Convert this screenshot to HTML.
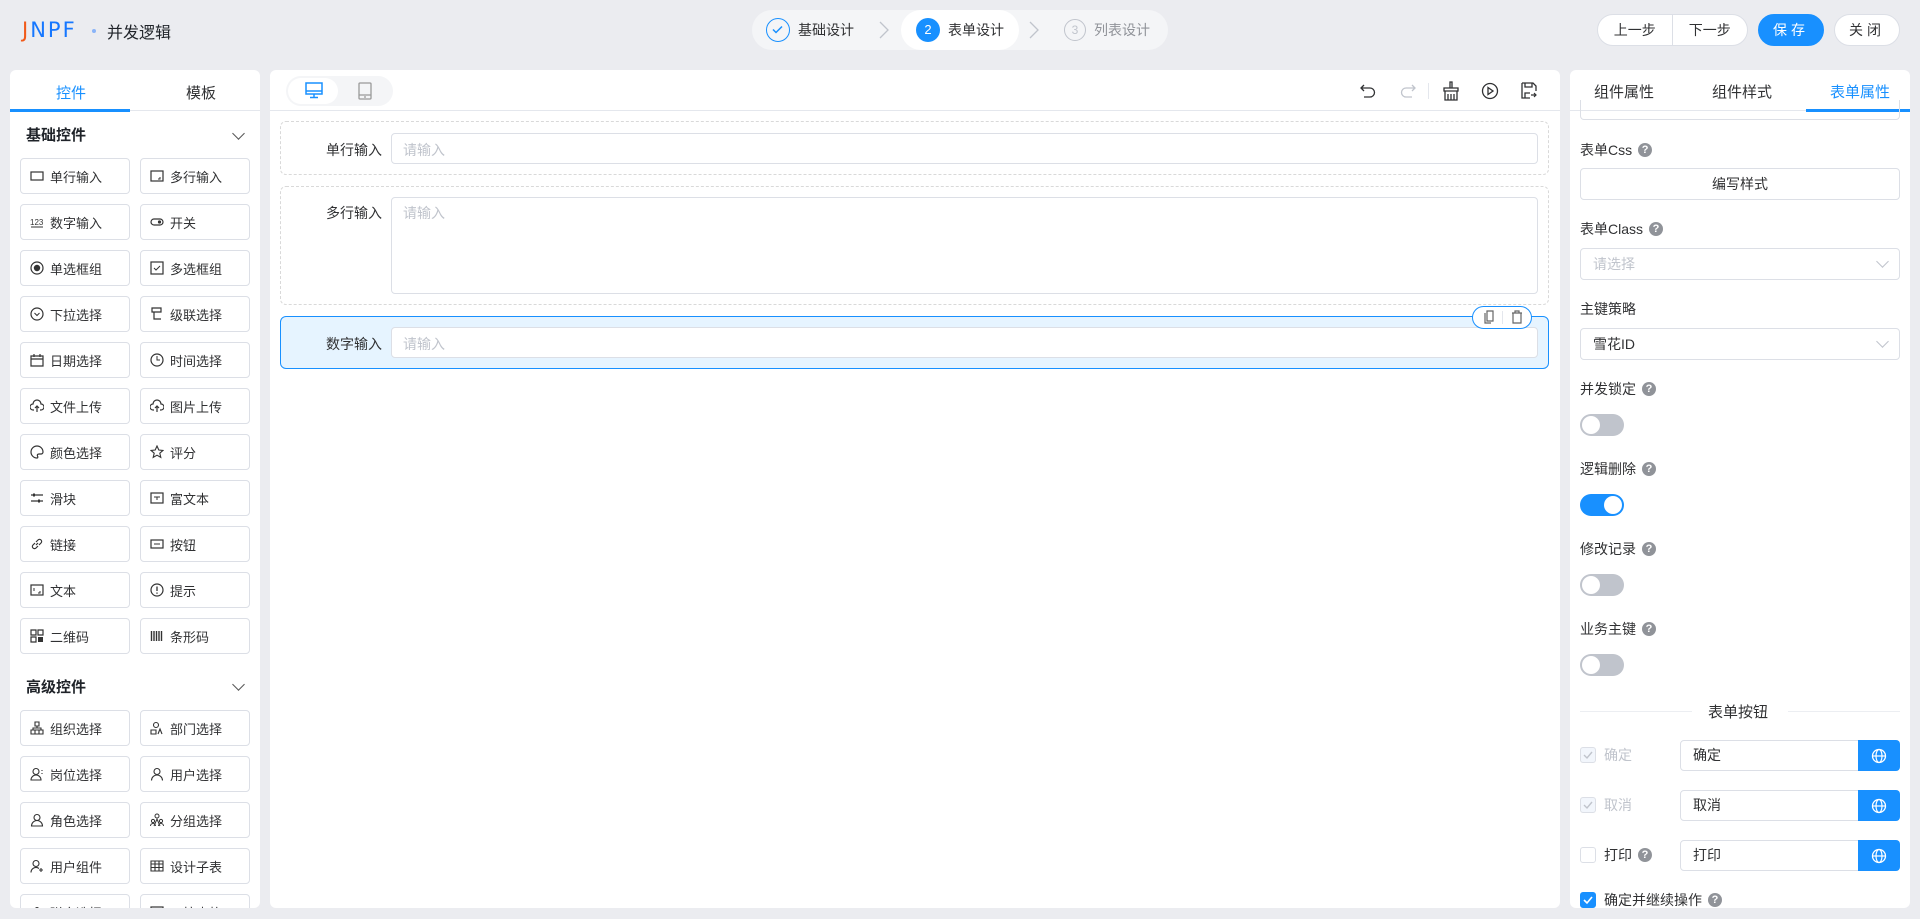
<!DOCTYPE html>
<html><head><meta charset="utf-8"><style>
*{box-sizing:border-box;margin:0;padding:0}
body{width:1920px;height:919px;background:#ebecf0;font-family:"Liberation Sans","Noto Sans CJK SC",sans-serif;font-size:14px;color:#303133;position:relative;overflow:hidden}
.abs{position:absolute}
.panel{position:absolute;background:#fff;border-radius:6px;overflow:hidden}
.item{position:absolute;width:110px;height:36px;border:1px solid #dcdfe6;border-radius:4px;font-size:13px;display:flex;align-items:center;padding-left:9px;color:#303133;background:#fff}
.item svg{width:14px;height:14px;margin-right:6px;flex:none}
.sec{position:absolute;left:26px;font-size:15px;font-weight:bold;color:#1f2329}
.chev{position:absolute;width:9px;height:9px;border-right:1.5px solid #555;border-bottom:1.5px solid #555;transform:rotate(45deg)}
.lbl{position:absolute;left:1580px;font-size:14px;color:#303133;line-height:20px;display:flex;align-items:center}
.q{display:inline-block;width:14px;height:14px;border-radius:50%;background:#909399;color:#fff;font-size:11px;font-weight:bold;line-height:14px;text-align:center;margin-left:6px}
.inp{position:absolute;border:1px solid #dcdfe6;border-radius:4px;background:#fff}
.tog{position:absolute;left:1580px;width:44px;height:22px;border-radius:11px;background:#c0c4cc}
.tog::after{content:"";position:absolute;top:2px;left:2px;width:18px;height:18px;border-radius:50%;background:#fff}
.tog.on{background:#1890ff}.tog.on::after{left:24px}
.btn{position:absolute;height:32px;border-radius:16px;border:1px solid #dcdfe6;background:#fff;display:flex;align-items:center;justify-content:center;font-size:14px}
.cb{position:absolute;left:1580px;width:16px;height:16px;border:1px solid #dcdfe6;border-radius:3px;background:#f2f6fc}
.glob{position:absolute;left:1858px;width:42px;height:31px;background:#1890ff;border-radius:0 4px 4px 0;display:flex;align-items:center;justify-content:center}
</style></head><body>

<!-- header -->
<div class="abs" style="left:22px;top:19px;font-size:21px;font-weight:normal;letter-spacing:2px;line-height:22px;font-family:'DejaVu Sans',sans-serif"><span style="color:#f05a1a">J</span><span style="color:#1677ff">NPF</span></div>
<div class="abs" style="left:92px;top:29px;width:4px;height:4px;border-radius:50%;background:#8ab4f8"></div>
<div class="abs" style="left:107px;top:19px;font-size:16px;color:#1f2329">并发逻辑</div>

<div class="abs" style="left:752px;top:10px;width:416px;height:40px;background:#f4f5f7;border-radius:20px"></div>
<div class="abs" style="left:901px;top:10px;width:118px;height:40px;background:#fff;border-radius:20px"></div>
<div class="abs" style="left:766px;top:18px;width:24px;height:24px;border:1.5px solid #1890ff;border-radius:50%"><svg width="21" height="21" viewBox="0 0 21 21"><path d="M6 10.5l3 3 6-6" fill="none" stroke="#1890ff" stroke-width="1.5"/></svg></div>
<div class="abs" style="left:798px;top:20px;font-size:14px;color:#303133">基础设计</div>
<svg class="abs" style="left:878px;top:20px" width="12" height="20"><path d="M2 2l8 8-8 8" fill="none" stroke="#c0c4cc" stroke-width="1.3"/></svg>
<div class="abs" style="left:916px;top:18px;width:24px;height:24px;background:#1890ff;border-radius:50%;color:#fff;font-size:13px;text-align:center;line-height:24px">2</div>
<div class="abs" style="left:948px;top:20px;font-size:14px;color:#303133">表单设计</div>
<svg class="abs" style="left:1028px;top:20px" width="12" height="20"><path d="M2 2l8 8-8 8" fill="none" stroke="#c0c4cc" stroke-width="1.3"/></svg>
<div class="abs" style="left:1064px;top:19px;width:22px;height:22px;border:1px solid #c0c4cc;border-radius:50%;color:#c0c4cc;font-size:12px;text-align:center;line-height:20px">3</div>
<div class="abs" style="left:1094px;top:20px;font-size:14px;color:#909399">列表设计</div>

<div class="btn" style="left:1597px;top:14px;width:151px;padding:0"><span style="width:75px;text-align:center;border-right:1px solid #dcdfe6;line-height:30px">上一步</span><span style="width:75px;text-align:center">下一步</span></div>
<div class="btn" style="left:1758px;top:14px;width:66px;background:#1890ff;border-color:#1890ff;color:#fff;letter-spacing:4px">保存</div>
<div class="btn" style="left:1834px;top:14px;width:66px;letter-spacing:4px">关闭</div>

<!-- left panel -->
<div class="panel" style="left:10px;top:70px;width:250px;height:838px">
 <div class="abs" style="left:0;top:0;width:250px;height:41px;border-bottom:1px solid #e4e7ed"></div>
 <div class="abs" style="left:0;top:39px;width:120px;height:3px;background:#1890ff"></div>
 <div class="abs" style="left:46px;top:12px;font-size:15px;color:#1890ff">控件</div>
 <div class="abs" style="left:176px;top:12px;font-size:15px;color:#303133">模板</div>
</div>
<div class="sec" style="top:124px">基础控件</div><div class="chev" style="left:234px;top:129px"></div>
<div class="sec" style="top:676px">高级控件</div><div class="chev" style="left:234px;top:680px"></div>

<!-- center -->
<div class="panel" style="left:270px;top:70px;width:1290px;height:838px">
 <div class="abs" style="left:0;top:0;width:1290px;height:41px;border-bottom:1px solid #e4e7ed"></div>
 <div class="abs" style="left:16px;top:6px;width:107px;height:30px;background:#f4f5f7;border-radius:15px"></div>
 <div class="abs" style="left:18px;top:8px;width:50px;height:26px;background:#fff;border-radius:13px"></div>
 <svg class="abs" style="left:35px;top:12px" width="18" height="17" viewBox="0 0 18 17"><rect x="1" y="1" width="16" height="11" fill="none" stroke="#1890ff" stroke-width="1.5"/><path d="M1 9h16M9 12v3M5 15.5h8" stroke="#1890ff" stroke-width="1.5"/></svg>
 <svg class="abs" style="left:88px;top:12px" width="14" height="18" viewBox="0 0 14 18"><rect x="1" y="1" width="12" height="16" rx="1" fill="none" stroke="#999" stroke-width="1.3"/><path d="M1 13h12M6 15h2" stroke="#999" stroke-width="1.2"/></svg>
 <svg class="abs" style="left:1090px;top:13px" width="16" height="16" viewBox="0 0 16 16"><path d="M4 2L1 5l3 3M1 5h9a4.5 4.5 0 010 9H4" fill="none" stroke="#303133" stroke-width="1.3"/></svg>
 <svg class="abs" style="left:1130px;top:13px" width="16" height="16" viewBox="0 0 16 16"><path d="M12 2l3 3-3 3M15 5H6a4.5 4.5 0 000 9h6" fill="none" stroke="#c0c4cc" stroke-width="1.3"/></svg>
 <div class="abs" style="left:1158px;top:13px;width:1px;height:16px;background:#e4e7ed"></div>
 <svg class="abs" style="left:1172px;top:11px" width="18" height="20" viewBox="0 0 18 20"><path d="M8 1h2v6H8zM2 7h14v3H2zM3 10h12v9H3zM6 13v6M9 13v6M12 13v6" fill="none" stroke="#303133" stroke-width="1.3"/></svg>
 <svg class="abs" style="left:1211px;top:12px" width="18" height="18" viewBox="0 0 18 18"><circle cx="9" cy="9" r="7.5" fill="none" stroke="#303133" stroke-width="1.3"/><path d="M7 5.5l5 3.5-5 3.5z" fill="none" stroke="#303133" stroke-width="1.3"/></svg>
 <svg class="abs" style="left:1251px;top:12px" width="16" height="17" viewBox="0 0 16 17"><path d="M1 1h11l3 3v5M1 1v15h8M4 1v4h7V1M4 16v-5h5" fill="none" stroke="#303133" stroke-width="1.3"/><path d="M10 13h5M13 11l2 2-2 2" fill="none" stroke="#303133" stroke-width="1.2"/></svg>

 <div class="abs" style="left:10px;top:51px;width:1269px;height:54px;border:1px dashed #d9d9d9;border-radius:6px"></div>
 <div class="abs" style="left:10px;top:116px;width:1269px;height:119px;border:1px dashed #d9d9d9;border-radius:6px"></div>
 <div class="abs" style="left:10px;top:246px;width:1269px;height:53px;border:1px solid #1890ff;border-radius:6px;background:#e6f4ff"></div>
 <div class="abs" style="left:24px;top:70px;width:88px;text-align:right;font-size:14px">单行输入</div>
 <div class="inp" style="left:121px;top:63px;width:1147px;height:31px"></div>
 <div class="abs" style="left:133px;top:70px;color:#c0c4cc">请输入</div>
 <div class="abs" style="left:24px;top:133px;width:88px;text-align:right">多行输入</div>
 <div class="inp" style="left:121px;top:127px;width:1147px;height:97px"></div>
 <div class="abs" style="left:133px;top:133px;color:#c0c4cc">请输入</div>
 <div class="abs" style="left:24px;top:264px;width:88px;text-align:right">数字输入</div>
 <div class="inp" style="left:121px;top:257px;width:1147px;height:31px"></div>
 <div class="abs" style="left:133px;top:264px;color:#c0c4cc">请输入</div>
 <div class="abs" style="left:1202px;top:236px;width:60px;height:23px;border:1px solid #1890ff;border-radius:12px;background:#fff"></div>
 <div class="abs" style="left:1232px;top:241px;width:1px;height:13px;background:#e4e7ed"></div>
 <svg class="abs" style="left:1213px;top:240px" width="12" height="14" viewBox="0 0 12 14"><path d="M4 1h6v10H4zM2 3v10h6" fill="none" stroke="#666" stroke-width="1.2"/></svg>
 <svg class="abs" style="left:1241px;top:240px" width="12" height="14" viewBox="0 0 12 14"><path d="M1 3h10M4 3V1h4v2M2 3v10h8V3" fill="none" stroke="#666" stroke-width="1.2"/></svg>
</div>

<!-- right panel -->
<div class="panel" style="left:1570px;top:70px;width:340px;height:838px">
 <div class="abs" style="left:0;top:0;width:340px;height:41px;border-bottom:1px solid #e4e7ed"></div>
 <div class="abs" style="left:236px;top:39px;width:104px;height:3px;background:#1890ff"></div>
 <div class="abs" style="left:24px;top:11px;font-size:15px">组件属性</div>
 <div class="abs" style="left:142px;top:11px;font-size:15px">组件样式</div>
 <div class="abs" style="left:260px;top:11px;font-size:15px;color:#1890ff">表单属性</div>
 <div class="abs" style="left:10px;top:30px;width:320px;height:20px;border:1px solid #dcdfe6;border-top:none;border-radius:0 0 4px 4px"></div>
</div>
<div class="lbl" style="top:140px">表单Css<span class="q">?</span></div>
<div class="inp" style="left:1580px;top:168px;width:320px;height:32px;text-align:center;line-height:30px">编写样式</div>
<div class="lbl" style="top:219px">表单Class<span class="q">?</span></div>
<div class="inp" style="left:1580px;top:248px;width:320px;height:32px;color:#c0c4cc;padding-left:12px;line-height:30px">请选择</div>
<div class="chev" style="left:1878px;top:257px;border-color:#c0c4cc;border-width:1px"></div>
<div class="lbl" style="top:299px">主键策略</div>
<div class="inp" style="left:1580px;top:328px;width:320px;height:32px;padding-left:12px;line-height:30px">雪花ID</div>
<div class="chev" style="left:1878px;top:337px;border-color:#c0c4cc;border-width:1px"></div>
<div class="lbl" style="top:379px">并发锁定<span class="q">?</span></div>
<div class="tog" style="top:414px"></div>
<div class="lbl" style="top:459px">逻辑删除<span class="q">?</span></div>
<div class="tog on" style="top:494px"></div>
<div class="lbl" style="top:539px">修改记录<span class="q">?</span></div>
<div class="tog" style="top:574px"></div>
<div class="lbl" style="top:619px">业务主键<span class="q">?</span></div>
<div class="tog" style="top:654px"></div>
<div class="abs" style="left:1580px;top:711px;width:112px;height:1px;background:#eceef2"></div>
<div class="abs" style="left:1788px;top:711px;width:112px;height:1px;background:#eceef2"></div>
<div class="abs" style="left:1708px;top:701px;font-size:15px">表单按钮</div>

<div class="cb" style="top:747px"><svg width="14" height="14"><path d="M3 7l3 3 5-6" fill="none" stroke="#c0c4cc" stroke-width="1.4"/></svg></div>
<div class="lbl" style="left:1604px;top:745px;color:#c0c4cc">确定</div>
<div class="inp" style="left:1680px;top:740px;width:190px;height:31px;padding-left:12px;line-height:29px">确定</div>
<div class="glob" style="top:740px"><svg width="16" height="16" viewBox="0 0 16 16"><circle cx="8" cy="8" r="6.5" fill="none" stroke="#fff" stroke-width="1.3"/><ellipse cx="8" cy="8" rx="3" ry="6.5" fill="none" stroke="#fff" stroke-width="1.2"/><path d="M1.5 8h13" stroke="#fff" stroke-width="1.2"/></svg></div>
<div class="cb" style="top:797px"><svg width="14" height="14"><path d="M3 7l3 3 5-6" fill="none" stroke="#c0c4cc" stroke-width="1.4"/></svg></div>
<div class="lbl" style="left:1604px;top:795px;color:#c0c4cc">取消</div>
<div class="inp" style="left:1680px;top:790px;width:190px;height:31px;padding-left:12px;line-height:29px">取消</div>
<div class="glob" style="top:790px"><svg width="16" height="16" viewBox="0 0 16 16"><circle cx="8" cy="8" r="6.5" fill="none" stroke="#fff" stroke-width="1.3"/><ellipse cx="8" cy="8" rx="3" ry="6.5" fill="none" stroke="#fff" stroke-width="1.2"/><path d="M1.5 8h13" stroke="#fff" stroke-width="1.2"/></svg></div>
<div class="cb" style="top:847px;background:#fff"></div>
<div class="lbl" style="left:1604px;top:845px">打印<span class="q">?</span></div>
<div class="inp" style="left:1680px;top:840px;width:190px;height:31px;padding-left:12px;line-height:29px">打印</div>
<div class="glob" style="top:840px"><svg width="16" height="16" viewBox="0 0 16 16"><circle cx="8" cy="8" r="6.5" fill="none" stroke="#fff" stroke-width="1.3"/><ellipse cx="8" cy="8" rx="3" ry="6.5" fill="none" stroke="#fff" stroke-width="1.2"/><path d="M1.5 8h13" stroke="#fff" stroke-width="1.2"/></svg></div>
<div class="cb" style="top:892px;background:#1890ff;border-color:#1890ff"><svg width="14" height="14"><path d="M3 7l3 3 5-6" fill="none" stroke="#fff" stroke-width="1.6"/></svg></div>
<div class="lbl" style="left:1604px;top:890px">确定并继续操作<span class="q">?</span></div>
<div class="abs" style="left:1570px;top:908px;width:340px;height:11px;background:#ebecf0"></div>

<div class="abs" style="left:0;top:0;width:270px;height:908px;overflow:hidden">
<div class="item" style="left:20px;top:158px"><svg viewBox="0 0 14 14"><rect x="1" y="3" width="12" height="8" fill="none" stroke="#333" stroke-width="1.2"/></svg>单行输入</div>
<div class="item" style="left:140px;top:158px"><svg viewBox="0 0 14 14"><rect x="1" y="2" width="12" height="10" fill="none" stroke="#333" stroke-width="1.2"/><path d="M10 8v2H8" stroke="#333" fill="none"/></svg>多行输入</div>
<div class="item" style="left:20px;top:204px"><svg viewBox="0 0 14 14"><text x="0" y="10" font-size="8" fill="#333">123</text><path d="M1 12h12" stroke="#333"/></svg>数字输入</div>
<div class="item" style="left:140px;top:204px"><svg viewBox="0 0 14 14"><rect x="1" y="4" width="12" height="6" rx="3" fill="none" stroke="#333" stroke-width="1.2"/><circle cx="9.5" cy="7" r="1.6" fill="#333"/></svg>开关</div>
<div class="item" style="left:20px;top:250px"><svg viewBox="0 0 14 14"><circle cx="7" cy="7" r="6" fill="none" stroke="#333" stroke-width="1.2"/><circle cx="7" cy="7" r="3.2" fill="#333"/></svg>单选框组</div>
<div class="item" style="left:140px;top:250px"><svg viewBox="0 0 14 14"><rect x="1" y="1" width="12" height="12" fill="none" stroke="#333" stroke-width="1.2"/><path d="M4 7l2 2 4-4" fill="none" stroke="#333"/></svg>多选框组</div>
<div class="item" style="left:20px;top:296px"><svg viewBox="0 0 14 14"><circle cx="7" cy="7" r="6" fill="none" stroke="#333" stroke-width="1.2"/><path d="M4.5 6l2.5 2.5L9.5 6" fill="none" stroke="#333"/></svg>下拉选择</div>
<div class="item" style="left:140px;top:296px"><svg viewBox="0 0 14 14"><path d="M2 1h9v4H2zM4 5v7h7" fill="none" stroke="#333" stroke-width="1.2"/></svg>级联选择</div>
<div class="item" style="left:20px;top:342px"><svg viewBox="0 0 14 14"><path d="M1 3h12v10H1zM1 6h12M4 1v3M10 1v3" fill="none" stroke="#333" stroke-width="1.2"/></svg>日期选择</div>
<div class="item" style="left:140px;top:342px"><svg viewBox="0 0 14 14"><circle cx="7" cy="7" r="6" fill="none" stroke="#333" stroke-width="1.2"/><path d="M7 3v4h3" fill="none" stroke="#333"/></svg>时间选择</div>
<div class="item" style="left:20px;top:388px"><svg viewBox="0 0 14 14"><path d="M4 11H3a3 3 0 010-6 4 4 0 018 0 3 3 0 010 6h-1M7 13V7M5 9l2-2 2 2" fill="none" stroke="#333" stroke-width="1.2"/></svg>文件上传</div>
<div class="item" style="left:140px;top:388px"><svg viewBox="0 0 14 14"><path d="M4 11H3a3 3 0 010-6 4 4 0 018 0 3 3 0 010 6h-1M7 13V7M5 9l2-2 2 2" fill="none" stroke="#333" stroke-width="1.2"/></svg>图片上传</div>
<div class="item" style="left:20px;top:434px"><svg viewBox="0 0 14 14"><path d="M7 1a6 6 0 100 12c1 0 1-1 .5-2s0-2 1.5-2h2a2 2 0 002-2A6 6 0 007 1z" fill="none" stroke="#333" stroke-width="1.2"/></svg>颜色选择</div>
<div class="item" style="left:140px;top:434px"><svg viewBox="0 0 14 14"><path d="M7 1l1.8 4 4.2.4-3.2 2.8 1 4.2L7 10.2 3.2 12.4l1-4.2L1 5.4 5.2 5z" fill="none" stroke="#333" stroke-width="1.1"/></svg>评分</div>
<div class="item" style="left:20px;top:480px"><svg viewBox="0 0 14 14"><path d="M1 4h12M1 10h12" stroke="#333" stroke-width="1.2"/><rect x="3" y="2.5" width="2" height="3" fill="#333"/><rect x="8" y="8.5" width="2" height="3" fill="#333"/></svg>滑块</div>
<div class="item" style="left:140px;top:480px"><svg viewBox="0 0 14 14"><rect x="1" y="2" width="12" height="10" fill="none" stroke="#333" stroke-width="1.2"/><path d="M4 6h6M7 6v3" stroke="#333"/></svg>富文本</div>
<div class="item" style="left:20px;top:526px"><svg viewBox="0 0 14 14"><path d="M6 8l2-2M5 6L3 8a2 2 0 003 3l2-2M9 8l2-2a2 2 0 00-3-3L6 5" fill="none" stroke="#333" stroke-width="1.2"/></svg>链接</div>
<div class="item" style="left:140px;top:526px"><svg viewBox="0 0 14 14"><rect x="1" y="3" width="12" height="8" fill="none" stroke="#333" stroke-width="1.2"/><path d="M4 7h6" stroke="#333"/></svg>按钮</div>
<div class="item" style="left:20px;top:572px"><svg viewBox="0 0 14 14"><rect x="1" y="2" width="12" height="10" fill="none" stroke="#333" stroke-width="1.2"/><path d="M4 5v3M10 8v2H8" stroke="#333" fill="none"/></svg>文本</div>
<div class="item" style="left:140px;top:572px"><svg viewBox="0 0 14 14"><circle cx="7" cy="7" r="6" fill="none" stroke="#333" stroke-width="1.2"/><path d="M7 3.5v4.5M7 9.5v1.2" stroke="#333" stroke-width="1.3"/></svg>提示</div>
<div class="item" style="left:20px;top:618px"><svg viewBox="0 0 14 14"><path d="M1 1h5v5H1zM8 1h5v5H8zM1 8h5v5H1z" fill="none" stroke="#333" stroke-width="1.2"/><rect x="8" y="8" width="5" height="5" fill="#333"/></svg>二维码</div>
<div class="item" style="left:140px;top:618px"><svg viewBox="0 0 14 14"><path d="M1.5 2v10M4 2v10M6.5 2v10M9 2v10M11.5 2v10" stroke="#333" stroke-width="1.4"/></svg>条形码</div>
<div class="item" style="left:20px;top:710px"><svg viewBox="0 0 14 14"><path d="M5 1h4v4H5zM1 9h4v4H1zM5 9h4v4H5zM9 9h4v4H9zM7 5v2M3 9V7h8v2" fill="none" stroke="#333" stroke-width="1.1"/></svg>组织选择</div>
<div class="item" style="left:140px;top:710px"><svg viewBox="0 0 14 14"><circle cx="6" cy="4" r="2.5" fill="none" stroke="#333" stroke-width="1.1"/><path d="M1 9h5v4H1zM8 13l2-5 2 5" fill="none" stroke="#333" stroke-width="1.1"/></svg>部门选择</div>
<div class="item" style="left:20px;top:756px"><svg viewBox="0 0 14 14"><circle cx="6" cy="4.5" r="3" fill="none" stroke="#333" stroke-width="1.1"/><path d="M1 13a5 5 0 0110 0zM12 3v1M12 6v1" fill="none" stroke="#333" stroke-width="1.1"/></svg>岗位选择</div>
<div class="item" style="left:140px;top:756px"><svg viewBox="0 0 14 14"><circle cx="7" cy="4.5" r="3" fill="none" stroke="#333" stroke-width="1.1"/><path d="M1.5 13.5a5.5 5.5 0 0111 0" fill="none" stroke="#333" stroke-width="1.1"/></svg>用户选择</div>
<div class="item" style="left:20px;top:802px"><svg viewBox="0 0 14 14"><circle cx="7" cy="4.5" r="3" fill="none" stroke="#333" stroke-width="1.1"/><path d="M1.5 13a5.5 5.5 0 0111 0z" fill="none" stroke="#333" stroke-width="1.1"/></svg>角色选择</div>
<div class="item" style="left:140px;top:802px"><svg viewBox="0 0 14 14"><circle cx="7" cy="3" r="2" fill="none" stroke="#333"/><circle cx="3" cy="8" r="1.6" fill="none" stroke="#333"/><circle cx="11" cy="8" r="1.6" fill="none" stroke="#333"/><path d="M4 13l3-7 3 7M0.5 13a2.5 2.5 0 015 0M8.5 13a2.5 2.5 0 015 0" fill="none" stroke="#333"/></svg>分组选择</div>
<div class="item" style="left:20px;top:848px"><svg viewBox="0 0 14 14"><circle cx="6" cy="4.5" r="3" fill="none" stroke="#333" stroke-width="1.1"/><path d="M1 13.5a5 5 0 018-4M11 9v4M9 11h4" fill="none" stroke="#333" stroke-width="1.1"/></svg>用户组件</div>
<div class="item" style="left:140px;top:848px"><svg viewBox="0 0 14 14"><path d="M1 2h12v10H1zM1 5h12M5 2v10M9 2v10M1 8.5h12" fill="none" stroke="#333" stroke-width="1.1"/></svg>设计子表</div>
<div class="item" style="left:20px;top:894px"><svg viewBox="0 0 14 14"><circle cx="7" cy="4" r="2" fill="#333"/></svg>弹窗选择</div>
<div class="item" style="left:140px;top:894px"><svg viewBox="0 0 14 14"><rect x="1" y="2" width="12" height="10" fill="none" stroke="#333" stroke-width="1.2"/></svg>下拉表格</div>
</div>
</body></html>
